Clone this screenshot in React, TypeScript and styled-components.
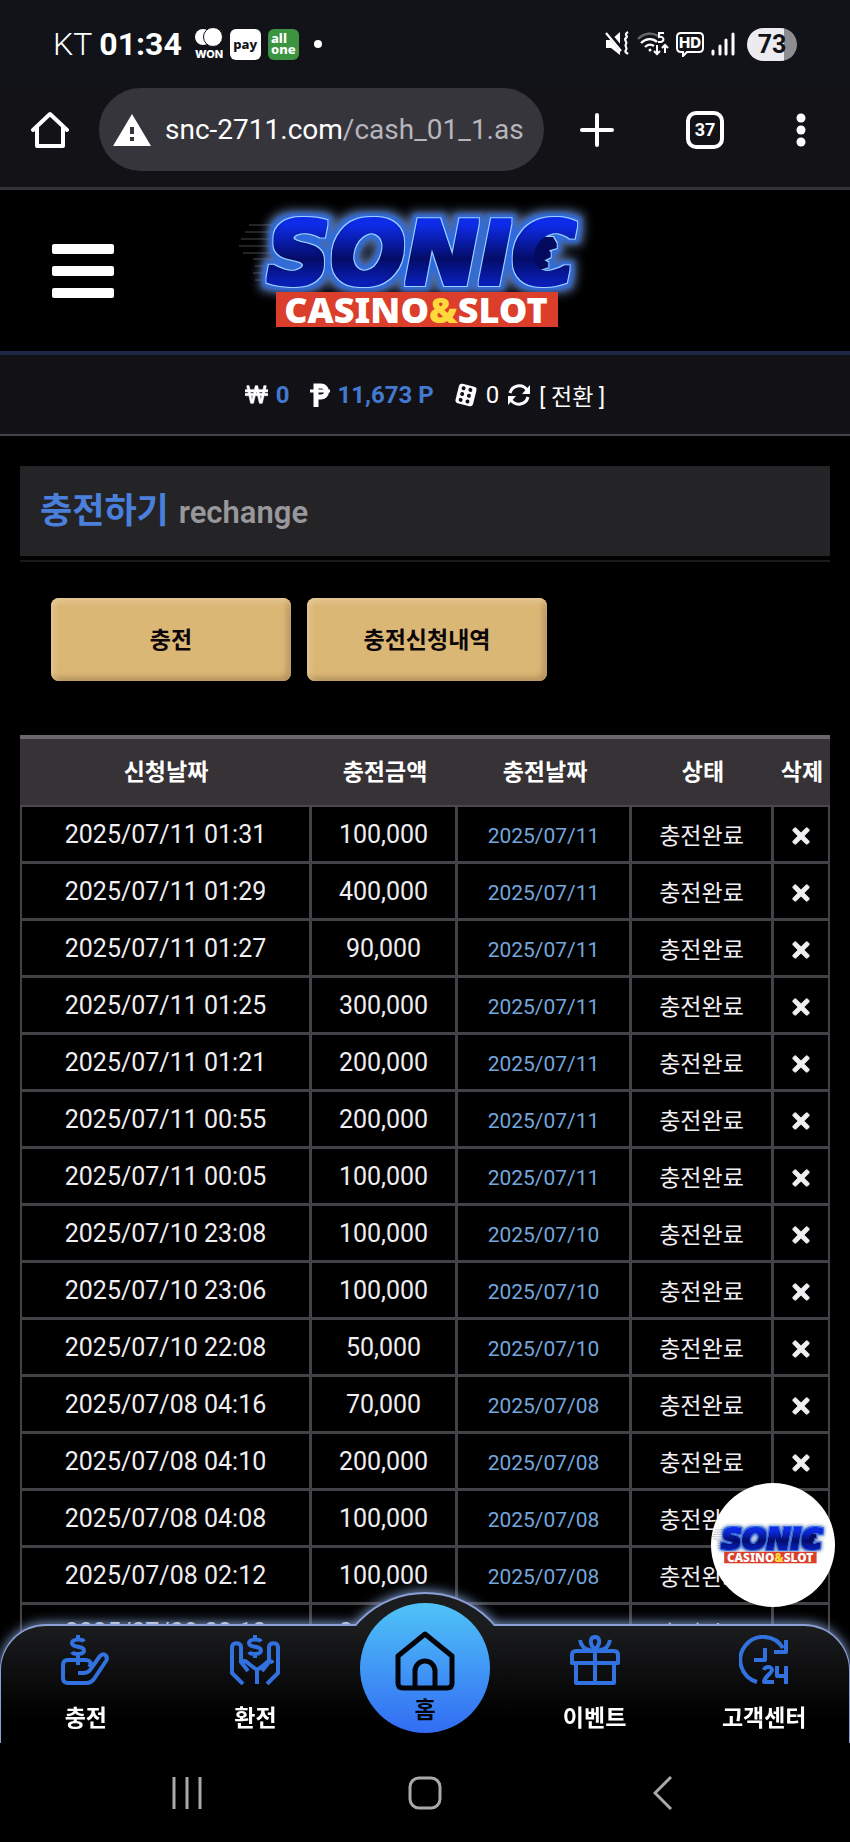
import { ReactNode, useId } from "react";
import { FaTimes, FaWonSign } from "react-icons/fa";
import styled, { createGlobalStyle } from "styled-components";

const rows = [
  { requested: "2025/07/11 01:31", amount: "100,000", paid: "2025/07/11", status: "충전완료" },
  { requested: "2025/07/11 01:29", amount: "400,000", paid: "2025/07/11", status: "충전완료" },
  { requested: "2025/07/11 01:27", amount: "90,000", paid: "2025/07/11", status: "충전완료" },
  { requested: "2025/07/11 01:25", amount: "300,000", paid: "2025/07/11", status: "충전완료" },
  { requested: "2025/07/11 01:21", amount: "200,000", paid: "2025/07/11", status: "충전완료" },
  { requested: "2025/07/11 00:55", amount: "200,000", paid: "2025/07/11", status: "충전완료" },
  { requested: "2025/07/11 00:05", amount: "100,000", paid: "2025/07/11", status: "충전완료" },
  { requested: "2025/07/10 23:08", amount: "100,000", paid: "2025/07/10", status: "충전완료" },
  { requested: "2025/07/10 23:06", amount: "100,000", paid: "2025/07/10", status: "충전완료" },
  { requested: "2025/07/10 22:08", amount: "50,000", paid: "2025/07/10", status: "충전완료" },
  { requested: "2025/07/08 04:16", amount: "70,000", paid: "2025/07/08", status: "충전완료" },
  { requested: "2025/07/08 04:10", amount: "200,000", paid: "2025/07/08", status: "충전완료" },
  { requested: "2025/07/08 04:08", amount: "100,000", paid: "2025/07/08", status: "충전완료" },
  { requested: "2025/07/08 02:12", amount: "100,000", paid: "2025/07/08", status: "충전완료" },
  { requested: "2025/07/08 02:10", amount: "200,000", paid: "2025/07/08", status: "충전완료" },
];

const SonicLogo = ({ width }: { width: number }) => {
  const id = useId();
  return (
    <LogoSvg width={width} viewBox="10 0 360 140" role="img" aria-label="Sonic Casino & Slot">
      <defs>
        {/* fattened letters, thin bright edge, solid rim, soft glow */}
        <filter id={`${id}neon`} x="-10%" y="-30%" width="120%" height="160%" colorInterpolationFilters="sRGB">
          <feMorphology in="SourceGraphic" operator="dilate" radius="2" result="fat" />
          <feMorphology in="SourceAlpha" operator="dilate" radius="3" result="edgeShape" />
          <feFlood floodColor="#9cd0ff" />
          <feComposite in2="edgeShape" operator="in" result="edge" />
          <feMorphology in="SourceAlpha" operator="dilate" radius="6" />
          <feGaussianBlur stdDeviation="2" result="rimShape" />
          <feFlood floodColor="#2f6be0" />
          <feComposite in2="rimShape" operator="in" result="rim" />
          <feMorphology in="SourceAlpha" operator="dilate" radius="9" />
          <feGaussianBlur stdDeviation="5" result="glowShape" />
          <feFlood floodColor="#6886bd" floodOpacity="0.8" />
          <feComposite in2="glowShape" operator="in" result="glow" />
          <feMerge>
            <feMergeNode in="glow" />
            <feMergeNode in="rim" />
            <feMergeNode in="edge" />
            <feMergeNode in="fat" />
          </feMerge>
        </filter>
        <linearGradient id={`${id}fill`} x1="0" y1="0" x2="0" y2="1">
          <stop offset="0.2" stopColor="#0d2be8" />
          <stop offset="0.55" stopColor="#030a60" />
          <stop offset="0.85" stopColor="#0a22c8" />
        </linearGradient>
      </defs>
      <path
        d="M14 24h50M10 31h50M6 38h50M4 45h50M8 52h40M18 58h30M20 65h30M18 72h30M20 79h30"
        stroke="#46464f"
        strokeWidth="1"
      />
      <g filter={`url(#${id}neon)`}>
        <LogoWord x="32" y="83" fill={`url(#${id}fill)`}>
          SONIC
        </LogoWord>
        <path d="M302 38l14 0 4 7-10 3 4 6-10 5 8 5-12 4z" fill="#030a60" />
      </g>
      <rect x="41" y="91" width="282" height="35" fill="#db3e2b" />
      <LogoTag x="181" y="122">
        CASINO<tspan fill="#ffd93b">&amp;</tspan>SLOT
      </LogoTag>
    </LogoSvg>
  );
};

const NavIcon = ({ children }: { children: ReactNode }) => (
  <svg width="50" height="50" viewBox="0 0 50 50" fill="none" stroke="#3272e0" strokeWidth="4" strokeLinejoin="round">
    {children}
  </svg>
);

const dollar = "M23 6.500c-1.500-2.500-12-3-12 1.500 0 5.500 12 2 12 7.500 0 4.500-10.500 4-12 1.500M17 0v4M17 19v4";

const App = () => {
  return (
    <Phone>
      <GlobalStyle />
      <StatusBar>
        <StatusGroup>
          <Carrier>KT</Carrier>
          <Clock>01:34</Clock>
          <svg width="28" height="32" viewBox="0 0 28 32">
            <circle cx="8" cy="9" r="8" fill="#fff" />
            <circle cx="18" cy="9" r="9.500" fill="#fff" stroke="#121318" />
            <TinyText x="14" y="30" fill="#fff" fontSize="11">WON</TinyText>
          </svg>
          <AppBadge $color="#fff" $text="#121318">pay</AppBadge>
          <AppBadge $color="#3c9440" $text="#fff">
            all
            <br />
            one
          </AppBadge>
          <Dot />
        </StatusGroup>
        <StatusGroup>
          <svg width="26" height="26" viewBox="0 0 26 26" fill="none" stroke="#fff" strokeWidth="2.200">
            <path d="M2 9h5l9-8v23l-9-7H2z" fill="#fff" stroke="none" />
            <path d="M3 1l16 19" stroke="#121318" strokeWidth="5" />
            <path d="M2 2l15 18" />
            <path d="M24 1c-5 3 1 4-2 6s2 4 0 6 2 4 0 6 1 3 2 4" />
          </svg>
          <svg width="32" height="26" viewBox="0 0 32 26" fill="none" stroke="#fff" strokeWidth="2.400">
            <path d="M1 8c6-6 14-7 20-3" stroke="#66676b" />
            <path d="M4 12c5-5 12-5 16-1M8 16c3-3 6-3 9-1" />
            <circle cx="13" cy="19" r="1.500" fill="#fff" stroke="none" />
            <path d="M20 14v9M17 20l3 3 3-3M28 22v-8M25 17l3-3 3 3" strokeWidth="2" />
            <path d="M27 2h-5v4c5-1 6 4 2 5h-3" strokeWidth="2" />
          </svg>
          <svg width="28" height="25" viewBox="0 0 28 25">
            <path
              d="M5 1h18q4 0 4 4v11q0 4-4 4H11l-4 4v-4H5q-4 0-4-4V5q0-4 4-4z"
              fill="none"
              stroke="#fff"
              strokeWidth="2"
            />
            <TinyText x="14" y="16" fill="#fff" fontSize="15">HD</TinyText>
          </svg>
          <svg width="24" height="24" viewBox="0 0 24 24" stroke="#fff" strokeWidth="3" strokeLinecap="round">
            <path d="M2 19v3M9 14v8M15 8v14M22 2v20" />
          </svg>
          <Battery>73</Battery>
        </StatusGroup>
      </StatusBar>

      <Toolbar>
        <IconButton aria-label="Home page">
          <svg width="38" height="38" viewBox="0 0 38 38" fill="none" stroke="#fff" strokeWidth="4" strokeLinejoin="round" strokeLinecap="round">
            <path d="M6 16v19h26V16M2 19L19 3l17 16" />
          </svg>
        </IconButton>
        <AddressBar>
          <svg width="38" height="32" viewBox="0 0 38 32">
            <path d="M19 0l19 32H0z" fill="#fff" />
            <path d="M19 13v7M19 23v4" stroke="#35353b" strokeWidth="4" />
          </svg>
          <Address>
            snc-2711.com<span>/cash_01_1.as</span>
          </Address>
        </AddressBar>
        <ToolbarActions>
          <IconButton aria-label="New tab">
            <svg width="34" height="34" viewBox="0 0 34 34" stroke="#fff" strokeWidth="4" strokeLinecap="round">
              <path d="M17 2v30M2 17h30" />
            </svg>
          </IconButton>
          <TabCount aria-label="Tabs">37</TabCount>
          <IconButton aria-label="Menu">
            <svg width="10" height="34" viewBox="0 0 10 34" fill="#fff">
              <circle cx="5" cy="5" r="4.500" />
              <circle cx="5" cy="17" r="4.500" />
              <circle cx="5" cy="29" r="4.500" />
            </svg>
          </IconButton>
        </ToolbarActions>
      </Toolbar>

      <Viewport>
        <SiteHeader>
          <Burger aria-label="메뉴">
            <span />
            <span />
            <span />
          </Burger>
          <SonicLogo width={360} />
        </SiteHeader>

        <BalanceBar>
          <Balance>
            <FaWonSign size={23} stroke="currentColor" strokeWidth={10} />
            <strong>0</strong>
          </Balance>
          <Balance>
            <svg width="20" height="24" viewBox="0 0 20 24" fill="none" stroke="#fff">
              <path d="M6 24V3h5a5 5 0 0 1 0 11H6" strokeWidth="5" />
              <path d="M0 8h20" strokeWidth="3" />
            </svg>
            <strong>11,673 P</strong>
          </Balance>
          <Balance>
            <svg width="24" height="24" viewBox="0 0 24 24">
              <g transform="rotate(14 12 12)">
                <rect x="3" y="2" width="18" height="20" rx="3" fill="#fff" />
                <g fill="#121115">
                  <circle cx="8" cy="6" r="2" />
                  <circle cx="15" cy="6" r="2" />
                  <circle cx="8" cy="12" r="2" />
                  <circle cx="15" cy="12" r="2" />
                  <circle cx="8" cy="18" r="2" />
                  <circle cx="15" cy="18" r="2" />
                </g>
              </g>
            </svg>
            <span>0</span>
            <svg width="24" height="24" viewBox="0 0 24 24" fill="none" stroke="#fff" strokeWidth="3">
              <path d="M3 10a9.500 9.500 0 0 1 17-3M21 14a9.500 9.500 0 0 1-17 3" />
              <path d="M23 2v9h-8zM1 22v-9h8z" fill="#fff" stroke="none" />
            </svg>
            <Convert>[ 전환 ]</Convert>
          </Balance>
        </BalanceBar>

        <Content>
          <TitleBox>
            <h1>충전하기</h1>
            <small>rechange</small>
          </TitleBox>
          <TabButtons>
            <GoldButton>충전</GoldButton>
            <GoldButton>충전신청내역</GoldButton>
          </TabButtons>

          <HistoryTable>
            <colgroup>
              <col />
              <col width="146" />
              <col width="174" />
              <col width="142" />
              <col width="56" />
            </colgroup>
            <thead>
              <tr>
                <th>신청날짜</th>
                <th>충전금액</th>
                <th>충전날짜</th>
                <th>상태</th>
                <th>삭제</th>
              </tr>
            </thead>
            <tbody>
              {rows.map((row) => (
                <tr key={row.requested}>
                  <td>{row.requested}</td>
                  <td>{row.amount}</td>
                  <PaidDate>{row.paid}</PaidDate>
                  <Status>{row.status}</Status>
                  <td>
                    <IconButton aria-label="삭제">
                      <FaTimes size={24} stroke="currentColor" strokeWidth={16} />
                    </IconButton>
                  </td>
                </tr>
              ))}
            </tbody>
          </HistoryTable>
        </Content>

        <FloatingLogo href="#" aria-label="Sonic">
          <SonicLogo width={118} />
        </FloatingLogo>

        <BottomNav>
          <NavBump />
          <NavPanel>
            <NavItem href="#">
              <NavIcon>
                <path d={dollar} />
                <path d="M17 22v8M17 38h5q5 0 7-3L39 21c3-4 9 0 6 5L33 44q-3 4-7 4H7q-5 0-5-5V30q0-5 5-5h17c6 0 7 4 4 7" />
              </NavIcon>
              충전
            </NavItem>
            <NavItem href="#">
              <NavIcon>
                <path d={dollar} transform="translate(8)" />
                <path d="M13 49L2 38V12c0-5 9-5 9 0v15l7 9M11 28c3-4 6-1 8 1l8 6 8-6c2-2 5-5 8-1M27 49V34M37 49l11-11V12c0-5-9-5-9 0v15l-7 9" />
              </NavIcon>
              환전
            </NavItem>
            <HomeItem href="#">
              <svg width="60" height="60" viewBox="0 0 60 60" fill="none" stroke="#02040a" strokeWidth="5" strokeLinejoin="round">
                <path d="M3 25L30 3l27 22v27q0 5-5 5H8q-5 0-5-5zM20 57V40a10 10 0 0 1 20 0v17" />
              </svg>
              홈
            </HomeItem>
            <NavItem href="#">
              <NavIcon>
                <path d="M2 28V20q0-4 4-4h38q4 0 4 4v8zM6 28v20h38V28M25 16v32M25 15c-7-8-4-13 0-13s7 5 0 13M21 15c-6 0-10-4-11-10M29 15c6 0 10-4 11-10" />
              </NavIcon>
              이벤트
            </NavItem>
            <NavItem href="#">
              <NavIcon>
                <path d="M18 47A23 23 0 1 1 44 13M47 5v12H35M26 13v12H15" />
                <path d="M25 35c1-4 8-4 8 0 0 3-8 7-8 12h10M38 31v10h10M47 31v18" />
              </NavIcon>
              고객센터
            </NavItem>
          </NavPanel>
        </BottomNav>
      </Viewport>

      <SystemNav>
        <IconButton aria-label="Recents">
          <svg width="32" height="34" viewBox="0 0 32 34" stroke="#a9a8ac" strokeWidth="3">
            <path d="M3 1v32M16 1v32M29 1v32" />
          </svg>
        </IconButton>
        <IconButton aria-label="Home">
          <svg width="34" height="34" viewBox="0 0 34 34" fill="none" stroke="#a9a8ac" strokeWidth="3">
            <rect x="2" y="2" width="30" height="30" rx="9" />
          </svg>
        </IconButton>
        <IconButton aria-label="Back">
          <svg width="20" height="34" viewBox="0 0 20 34" fill="none" stroke="#a9a8ac" strokeWidth="3">
            <path d="M18 1L2 17l16 16" />
          </svg>
        </IconButton>
      </SystemNav>
    </Phone>
  );
};

export default App;

const GlobalStyle = createGlobalStyle`
  * {
    box-sizing: border-box;
  }
  body {
    margin: 0;
    background: #000;
    color: #fff;
    font-family: Roboto, "Noto Sans CJK KR", sans-serif;
  }
  svg {
    display: block;
    flex-shrink: 0;
  }
`;

const Phone = styled.div`
  display: flex;
  flex-direction: column;
  height: 100vh;
  overflow: hidden;
`;

const StatusBar = styled.header`
  display: flex;
  align-items: center;
  justify-content: space-between;
  height: 88px;
  padding: 0 53px;
  background: #121318;
`;

const StatusGroup = styled.div`
  display: flex;
  align-items: center;
  gap: 7px;
`;

const Carrier = styled.span`
  font-size: 32px;
  font-weight: 300;
`;

const Clock = styled.span`
  margin-right: 6px;
  font-size: 32px;
  font-weight: 700;
`;

const TinyText = styled.text`
  font-family: Inter, sans-serif;
  font-weight: 800;
  text-anchor: middle;
`;

const AppBadge = styled.span<{ $color: string; $text: string }>`
  display: grid;
  place-items: center;
  width: 31px;
  height: 31px;
  border-radius: 6px;
  background: ${(props) => props.$color};
  color: ${(props) => props.$text};
  font-family: "Noto Sans", sans-serif;
  font-size: 13px;
  font-weight: 800;
  line-height: 11px;
`;

const Dot = styled.span`
  width: 8px;
  height: 8px;
  margin-left: 8px;
  border-radius: 50%;
  background: #fff;
`;

const Battery = styled.span`
  display: grid;
  place-items: center;
  width: 50px;
  height: 33px;
  margin-left: 5px;
  border-radius: 17px;
  background: linear-gradient(90deg, #ececf0 73%, #8c8c91 73%);
  color: #121318;
  font-size: 25px;
  font-weight: 700;
`;

const Toolbar = styled.div`
  display: flex;
  align-items: center;
  height: 102px;
  padding: 0 44px 16px 31px;
  border-bottom: 3px solid #333238;
  background: #131217;
`;

const IconButton = styled.button`
  display: inline-flex;
  align-items: center;
  justify-content: center;
  padding: 0;
  border: 0;
  background: none;
  color: inherit;
  vertical-align: middle;
  cursor: pointer;
`;

const AddressBar = styled.div`
  display: flex;
  flex: 1;
  align-items: center;
  gap: 14px;
  min-width: 0;
  height: 83px;
  margin: 0 36px 0 30px;
  padding: 0 14px;
  border-radius: 42px;
  background: #35353b;
`;

const Address = styled.div`
  min-width: 0;
  overflow: hidden;
  font-size: 28px;
  line-height: 40px;
  white-space: nowrap;

  span {
    color: #b7b6bc;
  }
`;

const ToolbarActions = styled.div`
  display: flex;
  flex-shrink: 0;
  align-items: center;
  justify-content: space-between;
  width: 226px;
`;

const TabCount = styled(IconButton)`
  width: 38px;
  height: 38px;
  border: 4px solid #fff;
  border-radius: 10px;
  font-family: Roboto, sans-serif;
  font-size: 18px;
  font-weight: 700;
`;

const Viewport = styled.main`
  position: relative;
  flex: 1;
  min-height: 0;
  overflow: hidden;
`;

const SiteHeader = styled.div`
  display: grid;
  grid-template-columns: 1fr auto 1fr;
  align-items: center;
  height: 165px;
  padding: 0 52px;
  border-bottom: 4px solid #1f2647;
`;

const Burger = styled(IconButton)`
  flex-direction: column;
  gap: 12px;
  justify-self: start;

  span {
    width: 62px;
    height: 10px;
    border-radius: 2px;
    background: #fff;
  }
`;

const LogoSvg = styled.svg`
  overflow: visible;
`;

const LogoWord = styled.text`
  font-family: "DejaVu Sans", sans-serif;
  font-size: 88px;
  font-style: italic;
  font-weight: 700;
`;

const LogoTag = styled.text`
  fill: #fff;
  font-family: "Noto Sans", sans-serif;
  font-size: 36px;
  font-weight: 900;
  text-anchor: middle;
`;

const BalanceBar = styled.div`
  display: flex;
  align-items: center;
  justify-content: center;
  gap: 20px;
  height: 81px;
  border-bottom: 2px solid #454448;
  background: #121115;
  font-size: 24px;
`;

const Balance = styled.div`
  display: flex;
  align-items: center;
  gap: 8px;

  strong {
    color: #4479d2;
  }
`;

const Convert = styled(IconButton)`
  font-family: inherit;
  font-size: 23px;
`;

const Content = styled.section`
  padding: 30px 20px 0;
`;

const TitleBox = styled.div`
  display: flex;
  align-items: baseline;
  gap: 10px;
  height: 90px;
  padding: 20px;
  background: #242326;
  box-shadow: 0 4px 0 #000, 0 6px 0 #1a1a1c;

  h1 {
    margin: 0;
    color: #4a80dc;
    font-size: 35px;
    line-height: 52px;
  }

  small {
    color: #98979b;
    font-size: 31px;
    font-weight: 600;
  }
`;

const TabButtons = styled.div`
  display: flex;
  gap: 16px;
  padding: 42px 31px 54px;
`;

const GoldButton = styled.button`
  width: 240px;
  height: 83px;
  padding-bottom: 5px;
  border: 0;
  border-radius: 8px;
  background: #dbb776;
  box-shadow: inset 2px 3px 6px #e8cb9a, inset -3px -3px 6px #a98a55;
  color: #0c0608;
  font-family: inherit;
  font-size: 23px;
  font-weight: 700;
  cursor: pointer;
`;

const HistoryTable = styled.table`
  width: 100%;
  border-spacing: 0;
  table-layout: fixed;
  font-size: 25px;
  text-align: center;

  th {
    height: 72px;
    padding: 0 0 4px;
    border-top: 4px solid #6c676b;
    border-bottom: 2px solid #4a484c;
    background: #363235;
    font-size: 23px;
  }

  td {
    height: 57px;
    padding: 0;
    border: solid #454247;
    border-width: 0 3px 3px 0;
    color: #f0eef2;
  }

  td:first-child {
    border-left-width: 2px;
  }

  td:last-child {
    border-right-width: 2px;
  }
`;

const PaidDate = styled.td`
  && {
    padding-top: 4px;
    color: #74a6dc;
    font-size: 21px;
  }
`;

const Status = styled.td`
  font-size: 23px;
`;

const FloatingLogo = styled.a`
  position: absolute;
  right: 15px;
  bottom: 136px;
  display: grid;
  place-items: center;
  width: 124px;
  height: 124px;
  border-radius: 50%;
  background: #fff;
`;

const BottomNav = styled.nav`
  position: absolute;
  inset: auto 0 0;
  filter: drop-shadow(0 -1px 6px #7f9bcc);
`;

const NavPanel = styled.div`
  display: grid;
  grid-template-columns: repeat(5, 1fr);
  height: 119px;
  border: solid #8b9fd6;
  border-width: 2px 1px 0;
  border-radius: 46px 46px 0 0;
  background: linear-gradient(#1b1c1e, #000 80%);
`;

/* Arc that lifts the panel edge around the home button. */
const NavBump = styled.div`
  position: absolute;
  top: -32px;
  left: 50%;
  z-index: 1;
  width: 138px;
  height: 34px;
  overflow: hidden;
  transform: translateX(-50%);

  &::before {
    content: "";
    position: absolute;
    top: 0;
    left: 50%;
    width: 180px;
    height: 180px;
    border: 2px solid #8b9fd6;
    border-radius: 50%;
    background: #1b1c1e;
    transform: translateX(-50%);
  }
`;

const NavItem = styled.a`
  display: flex;
  flex-direction: column;
  align-items: center;
  gap: 14px;
  padding-top: 9px;
  color: #fff;
  font-size: 23px;
  font-weight: 700;
  line-height: 40px;
  text-decoration: none;
`;

const HomeItem = styled(NavItem)`
  z-index: 2;
  gap: 0;
  justify-self: center;
  width: 130px;
  height: 130px;
  margin-top: -23px;
  padding-top: 28px;
  border-radius: 50%;
  background: linear-gradient(#4fc3f7, #326cf3);
  color: #02040a;
`;

const SystemNav = styled.footer`
  display: grid;
  grid-template-columns: repeat(3, 1fr);
  align-items: center;
  height: 99px;
  padding: 0 68px;
  background: #000;
`;
